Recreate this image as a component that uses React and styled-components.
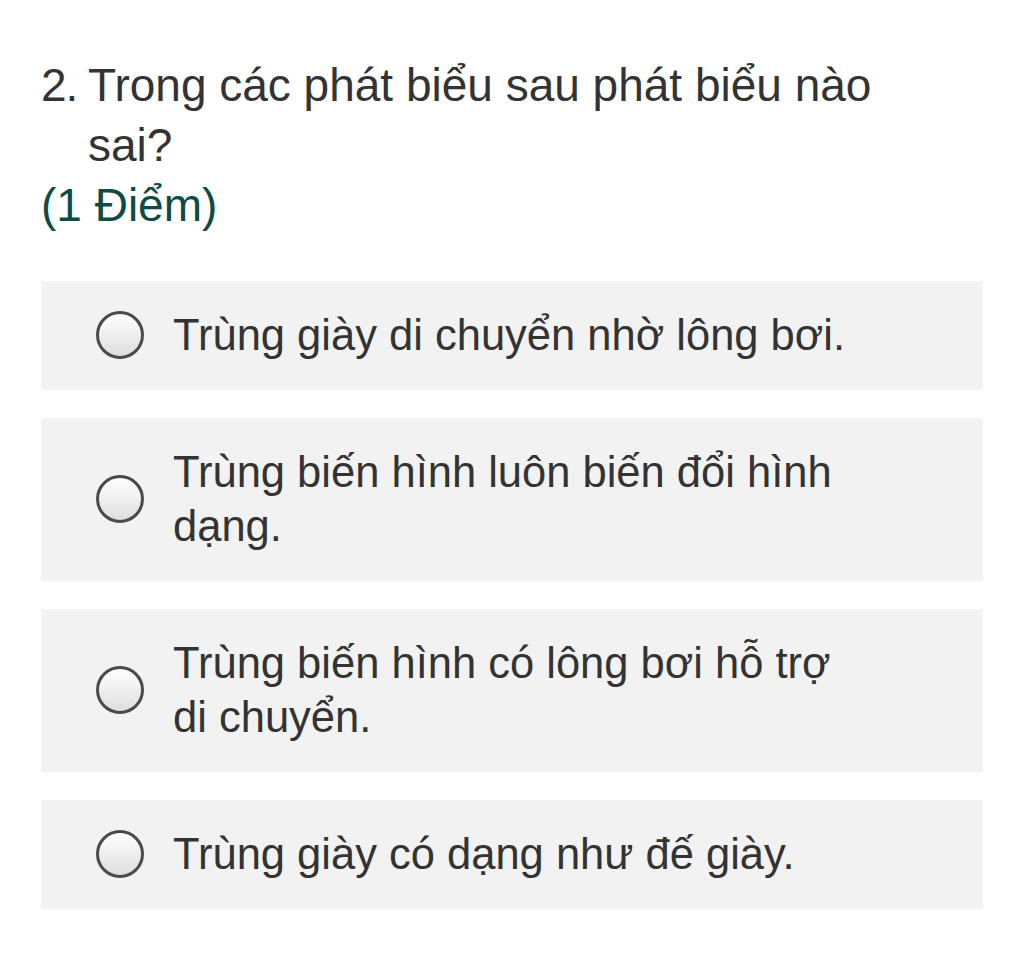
import React from 'react';
import styled, { createGlobalStyle } from 'styled-components';

const GlobalStyle = createGlobalStyle`
  body {
    margin: 0;
    background: #ffffff;
    font-family: "Liberation Sans", Arial, sans-serif;
  }
`;

const Page = styled.div`
  padding: 55px 41px 40px 41px;
  width: 942px;
`;

const Title = styled.div`
  display: flex;
  font-size: 46px;
  line-height: 60px;
  color: #333333;
`;

const Number = styled.span`
  flex: 0 0 47px;
  letter-spacing: -1px;
`;

const TitleText = styled.span`
  max-width: 820px;
`;

const Points = styled.div`
  font-size: 46px;
  line-height: 60px;
  color: #0d4c46;
  margin-bottom: 46px;
`;

const Options = styled.div`
  display: flex;
  flex-direction: column;
  gap: 28px;
`;

const Option = styled.label`
  display: flex;
  align-items: center;
  background: #f2f2f2;
  padding: 27px 60px 28px 55px;
  cursor: pointer;
`;

const Radio = styled.span`
  flex: 0 0 auto;
  width: 42px;
  height: 42px;
  border-radius: 50%;
  border: 3px solid #4a4a4a;
  background: linear-gradient(#ffffff, #dedede);
  margin-right: 29px;
`;

const OptionText = styled.span`
  font-size: 43.5px;
  line-height: 54px;
  color: #333333;
  max-width: 690px;
`;

const options = [
  'Trùng giày di chuyển nhờ lông bơi.',
  'Trùng biến hình luôn biến đổi hình dạng.',
  'Trùng biến hình có lông bơi hỗ trợ di chuyển.',
  'Trùng giày có dạng như đế giày.',
];

export default function App() {
  return (
    <Page>
      <GlobalStyle />
      <Title>
        <Number>2.</Number>
        <TitleText>Trong các phát biểu sau phát biểu nào sai?</TitleText>
      </Title>
      <Points>(1 Điểm)</Points>
      <Options>
        {options.map((text) => (
          <Option key={text}>
            <Radio />
            <OptionText>{text}</OptionText>
          </Option>
        ))}
      </Options>
    </Page>
  );
}
